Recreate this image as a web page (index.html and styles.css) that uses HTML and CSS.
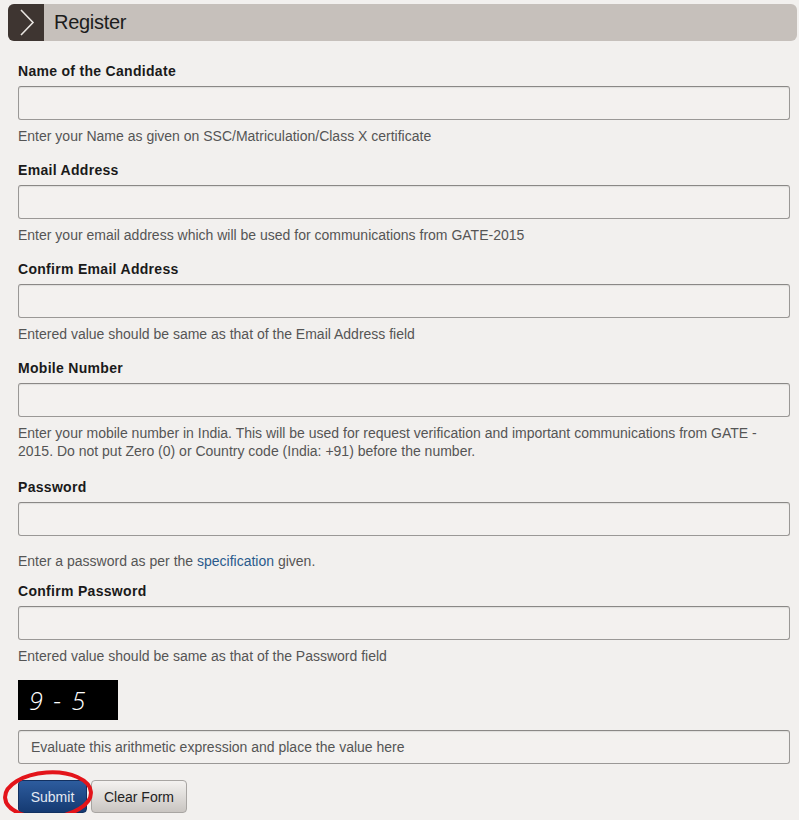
FILE: index.html
```html
<!DOCTYPE html>
<html>
<head>
<meta charset="utf-8">
<link rel="stylesheet" href="styles.css">
</head>
<body>
<div class="page">
  <div class="header">
    <div class="header-icon">
      <svg width="36" height="37" viewBox="0 0 36 37"><path d="M13 6 L25 18.5 L13 31" fill="none" stroke="#e8e4e0" stroke-width="1.6"/></svg>
    </div>
    <div class="header-title">Register</div>
  </div>
  <form class="form">
    <div class="field">
      <label class="label">Name of the Candidate</label>
      <input class="input" type="text">
      <div class="help">Enter your Name as given on SSC/Matriculation/Class X certificate</div>
    </div>
    <div class="field">
      <label class="label">Email Address</label>
      <input class="input" type="text">
      <div class="help">Enter your email address which will be used for communications from GATE-2015</div>
    </div>
    <div class="field">
      <label class="label">Confirm Email Address</label>
      <input class="input" type="text">
      <div class="help">Entered value should be same as that of the Email Address field</div>
    </div>
    <div class="field">
      <label class="label">Mobile Number</label>
      <input class="input" type="text">
      <div class="help help-long">Enter your mobile number in India. This will be used for request verification and important communications from GATE - 2015. Do not put Zero (0) or Country code (India: +91) before the number.</div>
    </div>
    <div class="field">
      <label class="label">Password</label>
      <input class="input" type="password">
      <div class="help help-gap">Enter a password as per the <a class="link" href="#">specification</a> given.</div>
    </div>
    <div class="field">
      <label class="label">Confirm Password</label>
      <input class="input" type="password">
      <div class="help help-last">Entered value should be same as that of the Password field</div>
    </div>
    <div class="captcha">9 - 5</div>
    <input class="input captcha-input" type="text" placeholder="Evaluate this arithmetic expression and place the value here">
    <div class="buttons">
      <span class="submit-wrap">
        <button class="btn btn-submit" type="button">Submit</button>
        <svg class="circle" width="94" height="54" viewBox="0 0 94 54"><ellipse cx="46" cy="27" rx="43" ry="22.5" fill="none" stroke="#e3141a" stroke-width="4" transform="rotate(-4 46 27)"/></svg>
      </span>
      <button class="btn btn-clear" type="button">Clear Form</button>
    </div>
  </form>
</div>
</body>
</html>
```
FILE: styles.css
```css
html, body {
  margin: 0;
  padding: 0;
  background: #f2f0ee;
}
body {
  font-family: "Liberation Sans", Arial, sans-serif;
  color: #222;
}
.page {
  padding: 4px 2px 0 8px;
}
.header {
  display: flex;
  height: 37px;
  border-radius: 6px;
  overflow: hidden;
  background: #c6c0bb;
}
.header-icon {
  width: 36px;
  height: 37px;
  background: #3e3531;
  display: flex;
}
.header-title {
  padding-left: 10px;
  font-size: 20px;
  line-height: 37px;
  color: #1c1c1c;
  letter-spacing: -0.3px;
}
.form {
  padding: 22px 0 0 10px;
  width: 772px;
}
.field {
  display: flex;
  flex-direction: column;
}
.label {
  font-weight: bold;
  font-size: 14px;
  letter-spacing: 0.3px;
  line-height: 16px;
  color: #1a1a1a;
}
.input {
  box-sizing: border-box;
  width: 772px;
  height: 34px;
  margin: 0;
  margin-top: 7px;
  border: 1px solid #9a9896;
  border-top-color: #8a8886;
  border-radius: 3px;
  background: #f3f1ef;
  box-shadow: inset 0 1px 1px rgba(0,0,0,0.08);
  font-family: "Liberation Sans", Arial, sans-serif;
  font-size: 14px;
  padding: 0 12px;
}
.help {
  font-size: 14px;
  line-height: 18px;
  color: #555;
  margin-top: 7px;
  margin-bottom: 17px;
}
.help-long {
  margin-bottom: 19px;
}
.help-gap {
  margin-top: 16px;
  margin-bottom: 13px;
}
.help-last {
  margin-bottom: 0;
}
.link {
  color: #2a5a8c;
  text-decoration: none;
}
.captcha {
  margin-top: 15px;
  width: 100px;
  height: 40px;
  background: #000;
  color: #fff;
  font-family: "Open Sans", sans-serif;
  font-style: italic;
  font-weight: 300;
  font-size: 25px;
  line-height: 40px;
  padding-left: 11px;
  box-sizing: border-box;
  letter-spacing: 2px;
}
.captcha-input {
  margin-top: 10px;
  color: #555;
}
.captcha-input::placeholder {
  color: #555;
  opacity: 1;
}
.buttons {
  display: flex;
  gap: 4px;
  margin-top: 16px;
}
.submit-wrap {
  position: relative;
  display: inline-flex;
}
.btn {
  height: 33px;
  margin: 0;
  border-radius: 4px;
  font-family: "Liberation Sans", Arial, sans-serif;
  font-size: 14px;
  padding: 0;
  white-space: nowrap;
}
.btn-submit {
  width: 69px;
  background: linear-gradient(#2d5c9e, #153a72);
  border: 1px solid #123060;
  color: #e4eaf2;
}
.btn-clear {
  width: 96px;
  background: linear-gradient(#f4f2f0, #c9c5c1);
  border: 1px solid #a8a5a2;
  color: #222;
}
.circle {
  position: absolute;
  left: -16px;
  top: -12px;
  pointer-events: none;
}
```
